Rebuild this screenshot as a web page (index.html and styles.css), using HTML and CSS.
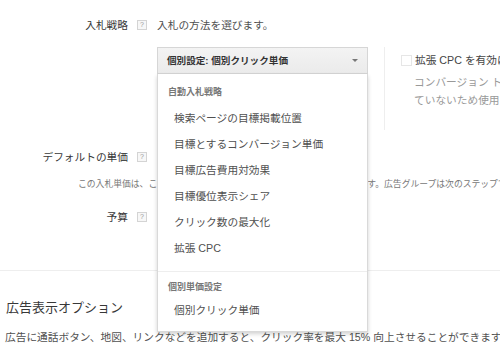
FILE: index.html
```html
<!DOCTYPE html>
<html lang="ja">
<head>
<meta charset="utf-8">
<link rel="stylesheet" href="styles.css">
</head>
<body>
<div class="page">
  <div class="row row-bid">
    <div class="label"><span>入札戦略</span><span class="help">?</span></div>
    <div class="value">入札の方法を選びます。</div>
  </div>

  <div class="row row-select">
    <div class="label"></div>
    <div class="value select-area">
      <div class="select-wrap">
        <div class="select-btn"><span>個別設定: 個別クリック単価</span><span class="caret"></span></div>
        <div class="menu">
          <div class="menu-head">自動入札戦略</div>
          <ul class="menu-list">
            <li>検索ページの目標掲載位置</li>
            <li>目標とするコンバージョン単価</li>
            <li>目標広告費用対効果</li>
            <li>目標優位表示シェア</li>
            <li>クリック数の最大化</li>
            <li>拡張 CPC</li>
          </ul>
          <div class="menu-sep"></div>
          <div class="menu-head">個別単価設定</div>
          <ul class="menu-list">
            <li>個別クリック単価</li>
          </ul>
        </div>
      </div>
      <div class="side-panel">
        <div class="check-line"><span class="checkbox"></span><span>拡張 CPC を有効にする</span></div>
        <div class="side-note">コンバージョン トラッキングが設定され<br>ていないため使用できません。</div>
      </div>
    </div>
  </div>

  <div class="row row-default">
    <div class="label"><span>デフォルトの単価</span><span class="help">?</span></div>
    <div class="value"></div>
  </div>
  <div class="note">この入札単価は、このキャンペーンの最初の広告グループにて使用されます。広告グループは次のステップで作成します。</div>

  <div class="row row-budget">
    <div class="label"><span>予算</span><span class="help">?</span></div>
    <div class="value"></div>
  </div>

  <div class="divider"></div>

  <h2 class="ext-title">広告表示オプション</h2>
  <p class="ext-desc">広告に通話ボタン、地図、リンクなどを追加すると、クリック率を最大 15% 向上させることができます。</p>
</div>
</body>
</html>
```

FILE: styles.css
```css
html, body {
  margin: 0;
  padding: 0;
  background: #fff;
  overflow: hidden;
}
body {
  font-family: "Liberation Sans", "Noto Sans CJK JP", sans-serif;
  font-size: 10.7px;
  color: #505050;
  width: 500px;
  height: 361px;
}
.page {
  padding-top: 17px;
  white-space: nowrap;
}
.row {
  display: grid;
  grid-template-columns: 147px 1fr;
  column-gap: 10px;
  line-height: 16px;
}
.label {
  display: flex;
  justify-content: flex-end;
  align-items: center;
  gap: 9px;
  color: #383838;
}
.help {
  display: inline-flex;
  align-items: center;
  justify-content: center;
  width: 8px;
  height: 8px;
  border: 1px solid #d4d4d4;
  background: #f7f7f7;
  color: #999;
  font-size: 7px;
  line-height: 8px;
}
.value {
  color: #505050;
}
.row-select {
  margin-top: 14px;
}
.select-area {
  display: flex;
  align-items: flex-start;
  gap: 16px;
}
.select-wrap {
  position: relative;
  width: 211px;
}
.select-btn {
  box-sizing: border-box;
  height: 27px;
  border: 1px solid #d6d6d6;
  background: linear-gradient(#f3f3f3, #ebebeb);
  display: flex;
  align-items: center;
  justify-content: space-between;
  padding: 0 9px 0 9px;
  font-weight: bold;
  font-size: 9.6px;
  color: #333;
}
.caret {
  width: 0;
  height: 0;
  border-left: 3px solid transparent;
  border-right: 3px solid transparent;
  border-top: 3px solid #777;
}
.menu {
  position: absolute;
  top: 27px;
  left: 0;
  width: 211px;
  box-sizing: border-box;
  background: #fff;
  border: 1px solid #d9d9d9;
  border-top: none;
  box-shadow: 0 2px 4px rgba(0, 0, 0, 0.18);
  padding: 10px 0 8px;
  z-index: 5;
}
.menu-head {
  padding-left: 10px;
  font-size: 9px;
  font-weight: bold;
  color: #777;
  line-height: 16px;
}
.menu-sep + .menu-head {
  margin-top: 7px;
}
.menu-list {
  list-style: none;
  margin: 5px 0 0;
  padding: 0;
}
.menu-list li {
  padding-left: 16px;
  line-height: 26px;
  color: #505050;
}
.menu-list + .menu-sep {
  margin-top: 10px;
}
.menu-sep {
  border-top: 1px solid #eee;
}
.menu-sep + .menu-head + .menu-list {
  margin-top: 2px;
}
.side-panel {
  border-left: 1px solid #eee;
  height: 83px;
  padding-left: 16px;
  padding-top: 4px;
  box-sizing: border-box;
}
.check-line {
  display: flex;
  align-items: center;
  gap: 3px;
  color: #444;
  line-height: 18px;
}
.checkbox {
  width: 9px;
  height: 9px;
  border: 1px solid #e6e6e6;
}
.side-note {
  margin-top: 4px;
  padding-left: 13px;
  color: #999;
  line-height: 18px;
}
.row-default {
  margin-top: 19px;
}
.note {
  margin-top: 11px;
  padding-left: 78px;
  font-size: 8.8px;
  color: #777;
  line-height: 16px;
}
.row-budget {
  margin-top: 17px;
}
.divider {
  margin-top: 45px;
  border-top: 1px solid #eee;
}
.ext-title {
  margin: 28px 0 0;
  padding-left: 6px;
  font-size: 13px;
  font-weight: normal;
  color: #383838;
  line-height: 18px;
}
.ext-desc {
  margin: 12px 0 0;
  padding-left: 5px;
  color: #505050;
  line-height: 16px;
}
```
